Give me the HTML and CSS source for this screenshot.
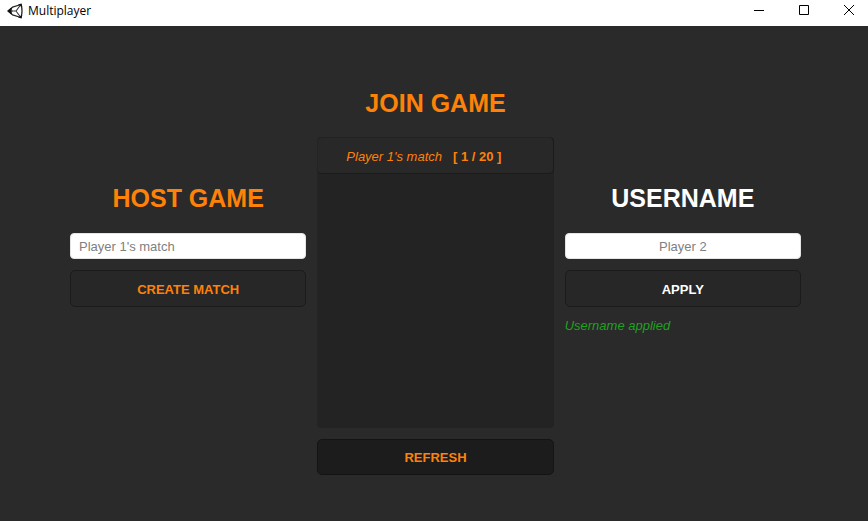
FILE: index.html
```html
<!DOCTYPE html>
<html lang="en">
<head>
<meta charset="utf-8">
<title>Multiplayer</title>
<link rel="stylesheet" href="styles.css">
</head>
<body>
<header class="titlebar">
  <svg class="logo" viewBox="0 0 16 16" aria-hidden="true">
    <path d="M1 8 5.500 4.200 14 1.500Q16 8 14 14.500L5.500 11.800Z" fill="none" stroke="#222" stroke-width="1.300" stroke-linejoin="round"/>
    <path d="M2 8H9L13.500 2M9 8 13.500 14" fill="none" stroke="#333" stroke-width="1.100"/>
    <path d="M.500 8 4.500 4.500 5.500 7V9L4.500 11.500ZM11 1.500 14.500.500 15.300 4ZM11 14.500 14.500 15.500 15.300 12Z" fill="#111"/>
    <path d="M4 7.300 6.500 5V7.300ZM4 8.700 6.500 11V8.700Z" fill="#fff"/>
  </svg>
  <span class="app-name">Multiplayer</span>
  <div class="window-controls">
    <button type="button" aria-label="Minimize"><svg viewBox="0 0 12 12"><path d="M1 5.500H11"/></svg></button>
    <button type="button" aria-label="Maximize"><svg viewBox="0 0 12 12"><path d="M1.500 .500H10.500V9.500H1.500Z"/></svg></button>
    <button type="button" aria-label="Close"><svg viewBox="0 0 12 12"><path d="M1 0 11 10M11 0 1 10"/></svg></button>
  </div>
</header>
<main class="lobby">
  <section class="panel side">
    <h2 class="accent"><label for="match">HOST GAME</label></h2>
    <input class="field" id="match" type="text" placeholder="Player 1's match">
    <button class="action accent" type="button">CREATE MATCH</button>
  </section>
  <section class="panel">
    <h2 class="accent">JOIN GAME</h2>
    <div class="match-list">
      <button class="match accent" type="button"><em>Player 1's match</em><strong>[ 1 / 20 ]</strong></button>
    </div>
    <button class="action refresh accent" type="button">REFRESH</button>
  </section>
  <section class="panel side">
    <h2><label for="username">USERNAME</label></h2>
    <input class="field centered" id="username" type="text" placeholder="Player 2">
    <button class="action" type="button">APPLY</button>
    <p class="status">Username applied</p>
  </section>
</main>
</body>
</html>
```
FILE: styles.css
```css
* {
  box-sizing: border-box;
}

body {
  margin: 0;
  min-height: 100vh;
  display: flex;
  flex-direction: column;
  background: #2a2a2a;
  color: #fff;
  font-family: "Liberation Sans", Arial, sans-serif;
  font-size: 13px;
}

button,
input {
  font: inherit;
  color: inherit;
}

.titlebar {
  display: flex;
  align-items: center;
  height: 26px;
  padding: 0 0 4px 7px;
  background: #fff;
  color: #000;
}

.logo {
  width: 16px;
  height: 16px;
}

.app-name {
  margin-left: 5px;
  font-family: "Open Sans", "Noto Sans", sans-serif;
  font-size: 12px;
  line-height: 20px;
}

.window-controls {
  display: flex;
  margin-left: auto;
}

.window-controls button {
  display: flex;
  justify-content: center;
  align-items: center;
  width: 45px;
  height: 20px;
  padding: 0 0 0 6px;
  border: 0;
  background: none;
}

.window-controls svg {
  width: 12px;
  height: 12px;
  fill: none;
  stroke: #000;
}

.lobby {
  flex: 1;
  display: grid;
  grid-template-columns: repeat(3, minmax(0, 1fr));
  align-items: start;
  gap: 11px;
  padding: 62px 67px 44px 70px;
}

.panel {
  display: flex;
  flex-direction: column;
  gap: 11px;
}

.side {
  padding-top: 95px;
}

h2 {
  margin: 0 0 8px;
  font-size: 25px;
  line-height: 30px;
  text-align: center;
}

.side h2 {
  margin-bottom: 9px;
}

.accent {
  color: #ff8208;
}

.field {
  width: 100%;
  height: 26px;
  padding: 1px 8px 0;
  border: 1px solid #e4e4e4;
  border-radius: 4px;
  background: #fff;
  color: #333;
}

.field::placeholder {
  color: #808080;
  opacity: 1;
}

.centered {
  text-align: center;
}

.action {
  height: 37px;
  padding: 2px 0 0;
  border: 1px solid #1b1b1b;
  border-radius: 5px;
  background: #272727;
  font-weight: bold;
}

.refresh {
  height: 36px;
  padding: 0;
  border-color: #141414;
  background: #1c1c1c;
}

.match-list {
  height: 291px;
  border-radius: 4px;
  background: #232323;
}

.match {
  display: flex;
  align-items: center;
  gap: 11px;
  width: 100%;
  height: 37px;
  padding: 2px 28px 0;
  border: 1px solid #1b1b1b;
  border-top-color: #222;
  border-left-color: #242424;
  border-radius: 5px;
  background: #282828;
}

.status {
  margin: 0;
  line-height: 15px;
  font-style: italic;
  color: #1fa01f;
}
```
